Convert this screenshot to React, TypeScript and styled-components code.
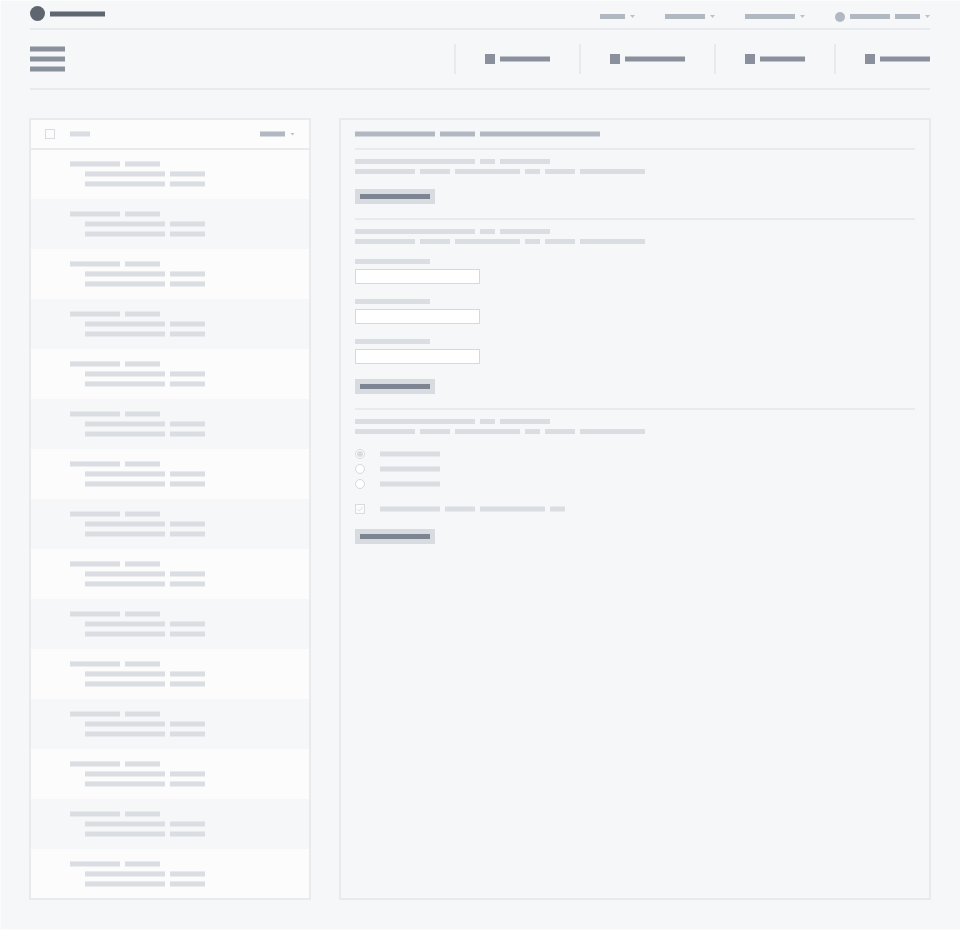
import React from 'react';
import styled, { createGlobalStyle } from 'styled-components';

const GlobalStyle = createGlobalStyle`
  html, body {
    margin: 0;
    padding: 0;
    background: #f6f7f9;
  }
  * {
    box-sizing: border-box;
  }
`;

const LINE = '#e8eaed';
const MUTED = '#dadde1';
const SLATE = '#b1b8c1';
const STEEL = '#8a919c';

const Page = styled.div`
  width: 960px;
  height: 930px;
  padding: 0 30px;
  overflow: hidden;
  background: #f6f7f9;
  box-shadow: inset 1px 1px 0 #fbfcfc, inset 0 -1px 0 #fbfcfc;
`;

const TopBar = styled.header`
  display: flex;
  justify-content: space-between;
  height: 30px;
  border-bottom: 2px solid ${LINE};
`;

const Brand = styled.div`
  display: flex;
  align-items: center;
  gap: 5px;
  height: 15px;
  margin-top: 6px;
`;

const BrandMark = styled.div`
  width: 15px;
  height: 15px;
  border-radius: 50%;
  background: #5f6670;
`;

const Menus = styled.nav`
  display: flex;
  gap: 30px;
  height: 11px;
  margin-top: 11px;
`;

const Menu = styled.div`
  display: flex;
  align-items: center;
  gap: 5px;
`;

const Avatar = styled.div`
  width: 10px;
  height: 10px;
  border-radius: 50%;
  background: ${SLATE};
`;

const Caret = styled.span`
  flex: none;
  width: 5px;
  height: 3px;
  background: #bcc2ca;
  clip-path: polygon(0 0, 100% 0, 50% 100%);
`;

// $soft: the bar sits on a half pixel in the picture, so both edges are faded
const Bar = styled.span<{ $w: number; $color?: string; $soft?: boolean }>`
  display: block;
  flex: none;
  width: ${(p) => p.$w}px;
  height: 5px;
  background: ${(p) => p.$color ?? MUTED};
  box-shadow: ${(p) =>
    p.$soft
      ? `inset 0 1px 0 rgba(246, 247, 249, 0.5), 0 1px 0 color-mix(in srgb, ${p.$color ?? MUTED} 50%, transparent)`
      : 'none'};
`;

const HeaderBar = styled(Bar)`
  margin-bottom: 1px;
`;

const NavBar = styled.div`
  display: flex;
  justify-content: space-between;
  align-items: center;
  height: 60px;
  overflow: hidden;
  border-bottom: 2px solid ${LINE};
`;

const Burger = styled.div`
  display: flex;
  flex-direction: column;
  gap: 5px;
  margin-top: -1px;
`;

const NavItems = styled.div`
  display: flex;
`;

const NavItem = styled.div`
  display: flex;
  align-items: center;
  gap: 5px;
  height: 30px;
  padding: 0 29px;
  border-left: 2px solid ${LINE};

  &:last-child {
    padding-right: 0;
  }
`;

const NavSquare = styled.div`
  width: 10px;
  height: 10px;
  background: ${STEEL};
`;

const Main = styled.main`
  display: grid;
  grid-template-columns: 282px 592px;
  gap: 28px;
  height: 782px;
  margin: 28px -1px 0;
`;

const ListPanel = styled.section`
  overflow: hidden;
  border: 2px solid ${LINE};
  background: #fcfcfc;
`;

const ListHeader = styled.div`
  display: flex;
  align-items: center;
  justify-content: space-between;
  height: 30px;
  padding: 0 14px;
  border-bottom: 2px solid ${LINE};
`;

const HeaderLeft = styled.div`
  display: flex;
  align-items: center;
  gap: 15px;
`;

const SortControl = styled.div`
  display: flex;
  align-items: center;
  gap: 5px;
`;

const CheckBox = styled.div`
  display: flex;
  flex: none;
  align-items: center;
  justify-content: center;
  width: 10px;
  height: 10px;
  border: 1px solid #d9dce0;
  background: #fcfcfc;
`;

const Row = styled.div`
  display: flex;
  flex-direction: column;
  gap: 5px;
  height: 50px;
  padding: 12px 0 0 39px;

  &:first-child {
    height: 49px;
    padding-top: 11px;
  }

  &:nth-child(even) {
    background: #f6f7f9;
  }
`;

const Line = styled.div<{ $indent?: boolean }>`
  display: flex;
  gap: 5px;
  margin-left: ${(p) => (p.$indent ? 15 : 0)}px;
`;

const OptionText = styled(Line)`
  margin-top: 2px;
`;

const DetailPanel = styled.section`
  padding: 0 14px;
  border: 2px solid ${LINE};
`;

const DetailHead = styled.div`
  display: flex;
  gap: 5px;
  height: 30px;
  padding-top: 11px;
  border-bottom: 2px solid ${LINE};
`;

const Section = styled.div`
  display: flex;
  flex-direction: column;
  gap: 15px;
  padding: 9px 0 14px;
  border-bottom: 2px solid ${LINE};

  &:last-child {
    border-bottom: none;
  }
`;

const TextBlock = styled.div`
  display: flex;
  flex-direction: column;
  gap: 5px;
`;

const Field = styled.label`
  display: flex;
  flex-direction: column;
  gap: 5px;
`;

const TextInput = styled.input`
  display: block;
  width: 125px;
  height: 15px;
  padding: 0;
  border: 1px solid #d5d8dd;
  border-radius: 0;
  outline: none;
  background: #fff;
`;

const Button = styled.button`
  display: flex;
  align-items: center;
  justify-content: center;
  width: 80px;
  height: 15px;
  padding: 0;
  border: none;
  background: #d8dbe0;
`;

const RadioGroup = styled.div`
  display: flex;
  flex-direction: column;
  gap: 5px;
`;

const OptionRow = styled.div`
  display: flex;
  align-items: flex-start;
  gap: 15px;
`;

const Radio = styled.div<{ $checked?: boolean }>`
  display: flex;
  flex: none;
  align-items: center;
  justify-content: center;
  width: 10px;
  height: 10px;
  border: 1px solid #d5d8dd;
  border-radius: 50%;
  background: #fff;

  &::after {
    content: '';
    display: ${(p) => (p.$checked ? 'block' : 'none')};
    width: 6px;
    height: 6px;
    border-radius: 50%;
    background: #d8dbe0;
  }
`;

const Bars: React.FC<{ widths: number[]; color?: string; soft?: boolean }> = ({
  widths,
  color,
  soft,
}) => (
  <>
    {widths.map((w, i) => (
      <Bar key={i} $w={w} $color={color} $soft={soft} />
    ))}
  </>
);

const Intro: React.FC = () => (
  <TextBlock>
    <Line>
      <Bars widths={[120, 15, 50]} />
    </Line>
    <Line>
      <Bars widths={[60, 30, 65, 15, 30, 65]} />
    </Line>
  </TextBlock>
);

const SaveButton: React.FC = () => (
  <Button type="button">
    <Bar $w={70} $color="#7d8492" />
  </Button>
);

const App: React.FC = () => (
  <Page>
    <GlobalStyle />
    <TopBar>
      <Brand>
        <BrandMark />
        <Bar $w={55} $color="#5f6670" $soft />
      </Brand>
      <Menus>
        <Menu>
          <Bar $w={25} $color={SLATE} />
          <Caret />
        </Menu>
        <Menu>
          <Bar $w={40} $color={SLATE} />
          <Caret />
        </Menu>
        <Menu>
          <Bar $w={50} $color={SLATE} />
          <Caret />
        </Menu>
        <Menu>
          <Avatar />
          <Bar $w={40} $color={SLATE} />
          <Bar $w={25} $color={SLATE} />
          <Caret />
        </Menu>
      </Menus>
    </TopBar>

    <NavBar>
      <Burger>
        <Bar $w={35} $color={STEEL} $soft />
        <Bar $w={35} $color={STEEL} $soft />
        <Bar $w={35} $color={STEEL} $soft />
      </Burger>
      <NavItems>
        {[50, 60, 45, 50].map((w, i) => (
          <NavItem key={i}>
            <NavSquare />
            <HeaderBar $w={w} $color={STEEL} $soft />
          </NavItem>
        ))}
      </NavItems>
    </NavBar>

    <Main>
      <ListPanel>
        <ListHeader>
          <HeaderLeft>
            <CheckBox />
            <HeaderBar $w={20} $soft />
          </HeaderLeft>
          <SortControl>
            <HeaderBar $w={25} $color={SLATE} $soft />
            <Caret />
          </SortControl>
        </ListHeader>
        <div>
          {Array.from({ length: 15 }, (_, i) => (
            <Row key={i}>
              <Line>
                <Bars widths={[50, 35]} soft />
              </Line>
              <Line $indent>
                <Bars widths={[80, 35]} soft />
              </Line>
              <Line $indent>
                <Bars widths={[80, 35]} soft />
              </Line>
            </Row>
          ))}
        </div>
      </ListPanel>

      <DetailPanel>
        <DetailHead>
          <Bars widths={[80, 35, 120]} color={SLATE} soft />
        </DetailHead>

        <Section>
          <Intro />
          <SaveButton />
        </Section>

        <Section>
          <Intro />
          {[0, 1, 2].map((i) => (
            <Field key={i}>
              <Bar $w={75} />
              <TextInput readOnly />
            </Field>
          ))}
          <SaveButton />
        </Section>

        <Section>
          <Intro />
          <RadioGroup>
            <OptionRow>
              <Radio $checked />
              <OptionText>
                <Bar $w={60} $soft />
              </OptionText>
            </OptionRow>
            <OptionRow>
              <Radio />
              <OptionText>
                <Bar $w={60} $soft />
              </OptionText>
            </OptionRow>
            <OptionRow>
              <Radio />
              <OptionText>
                <Bar $w={60} $soft />
              </OptionText>
            </OptionRow>
          </RadioGroup>
          <OptionRow>
            <CheckBox>
              <svg width="8" height="8" viewBox="0 0 8 8" fill="none">
                <path d="M1.5 4.2 L3.2 6 L6.8 1.8" stroke="#d5d8dd" strokeWidth="0.8" />
              </svg>
            </CheckBox>
            <OptionText>
              <Bars widths={[60, 30, 65, 15]} soft />
            </OptionText>
          </OptionRow>
          <SaveButton />
        </Section>
      </DetailPanel>
    </Main>
  </Page>
);

export default App;
